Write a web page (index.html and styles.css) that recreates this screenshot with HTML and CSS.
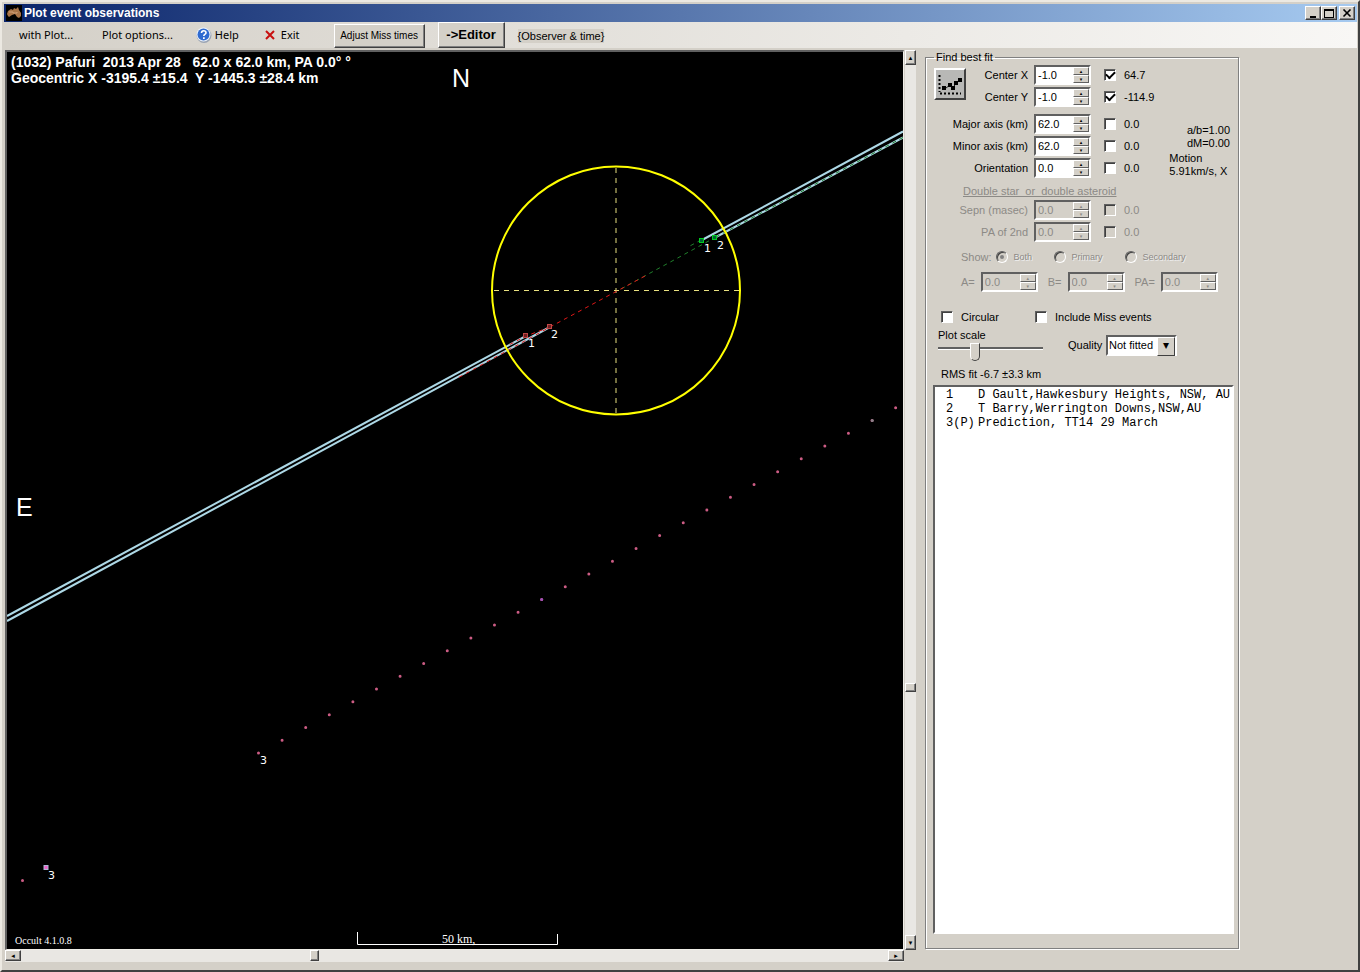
FILE: index.html
```html
<!DOCTYPE html>
<html lang="en">
<head>
<meta charset="utf-8">
<title>Plot event observations</title>
<link rel="stylesheet" href="styles.css">
</head>
<body>
<div class="window">
  <header class="titlebar">
    <svg class="app-icon" viewBox="0 0 16 16" aria-hidden="true"><rect width="16" height="16" fill="#000"/><path d="M1 9 2 6 5 4 7 5 8 3 10 4 12 2 13 5 15 8 15 11 13 13 11 12 9 9 6 10 3 12 2 11Z" fill="#a87448"/><path d="M3 7h4v1h4v-1" stroke="#cfa078" fill="none"/></svg>
    <h1>Plot event observations</h1>
    <div class="window-buttons">
      <button class="win-btn" aria-label="Minimize"><svg viewBox="0 0 10 9"><path d="M2 7h6v2H2z"/></svg></button>
      <button class="win-btn" aria-label="Maximize"><svg viewBox="0 0 10 9"><path d="M0 0h10v9H0zM1 2v6h8V2z" fill-rule="evenodd"/></svg></button>
      <button class="win-btn close" aria-label="Close"><svg viewBox="0 0 10 9"><path d="m1.500.5 7 7m0-7-7 7" stroke="#000" stroke-width="1.600"/></svg></button>
    </div>
  </header>
  <nav class="toolbar">
    <button class="menu">with Plot...</button>
    <button class="menu options">Plot options...</button>
    <button class="menu help"><svg viewBox="0 0 16 16" aria-hidden="true"><circle cx="8" cy="8.500" r="7.500" fill="#9aa4b4"/><circle cx="7.500" cy="7.500" r="7" fill="#eef4fb"/><circle cx="7.500" cy="7.500" r="6" fill="#2f6ad0"/><path d="M5.500 6q0-2.300 2.200-2.300T10 5.700q0 1-1.200 1.700-1 .6-1 1.700" fill="none" stroke="#fff" stroke-width="1.600"/><path d="M7 10.300h1.700v1.600H7z" fill="#fff"/></svg>Help</button>
    <button class="menu exit"><svg viewBox="0 0 10 10" aria-hidden="true"><path d="m1 1 8 8M9 1 1 9" stroke="#c81010" stroke-width="2"/></svg>Exit</button>
    <button class="push adjust">Adjust Miss times</button>
    <button class="push editor">-&gt;Editor</button>
    <span class="hint">{Observer &amp; time}</span>
  </nav>
  <main class="workspace">
    <section class="viewer">
      <div class="plot">
        <svg viewBox="7 52 896 896" preserveAspectRatio="xMinYMin meet" role="img" aria-label="Occultation chords">
          <g class="tracks">
            <path d="M903 131.500 702 240M903 137.500 716 237M526 336 7 616M550 327 7 621"/>
          </g>
          <path class="axis" d="M616 168V415M494 290.500H740"/>
          <path class="green" d="M903 137.500 716 237M701 240 688 247M716 237 621 289"/>
          <path class="red" d="M645 276 550 327 456 379M550 327 526 336 505 347"/>
          <circle class="body" cx="616" cy="290.500" r="124"/>
          <g class="mark-green"><rect x="699.500" y="238.500" width="4" height="4"/><rect x="712.500" y="235.500" width="4" height="4"/></g>
          <g class="mark-red"><rect x="523.500" y="333.500" width="4" height="4"/><rect x="547.500" y="324.500" width="4" height="4"/></g>
          <path class="prediction" d="M258.500 753 896 407.500"/>
          <path class="prediction" d="M22.500 880.500h.1"/>
          <path class="dot-grey" d="M872.300 420.500h.1"/>
          <path class="dot-violet" d="M541.700 599.600h.1"/>
          <rect class="marker" x="44" y="865.500" width="4" height="4"/>
          <g class="num"><text x="704" y="252">1</text><text x="717" y="249">2</text><text x="528" y="347">1</text><text x="551" y="338">2</text><text x="260" y="764">3</text><text x="48" y="879">3</text></g>
          <g class="caption"><text x="11" y="67">(1032) Pafuri  2013 Apr 28   62.0 x 62.0 km, PA 0.0° °</text><text x="11" y="83">Geocentric X -3195.4 ±15.4  Y -1445.3 ±28.4 km</text></g>
          <g class="compass"><text x="452" y="87">N</text><text x="16" y="516">E</text></g>
          <g class="serif"><text x="15" y="944">Occult 4.1.0.8</text><text x="442" y="943" class="scale">50 km,</text></g>
          <path class="rule" d="M357.500 932V944.500H557.500V934"/>
        </svg>
      </div>
      <div class="scroll vertical"><button aria-label="Scroll up">▴</button><i class="thumb"></i><button aria-label="Scroll down">▾</button></div>
      <div class="scroll horizontal"><button aria-label="Scroll left">◂</button><i class="thumb"></i><button aria-label="Scroll right">▸</button></div>
    </section>
    <fieldset class="fit">
      <legend>Find best fit</legend>
      <div class="block center">
        <button class="chart" aria-label="Fit"><svg viewBox="0 0 28 28"><path d="M3.500 5v17M4 23.500h21" stroke="#000" stroke-width="2" stroke-dasharray="2 2"/><path d="m7 18 3 0 4-3 3 3 3-5 4-3" fill="none" stroke="#222"/><path d="M6 16h4v4H6zM12 13h4v4h-4zM15 16h4v4h-4zM18 11h4v4h-4zM22 8h4v4h-4z"/></svg></button>
        <div class="rows">
          <div class="field"><label for="cx">Center X</label><span class="spin"><input id="cx" value="-1.0"><span class="arrows"><button aria-label="Up">▴</button><button aria-label="Down">▾</button></span></span><input type="checkbox" id="k1" checked><label for="k1">64.7</label></div>
          <div class="field"><label for="cy">Center Y</label><span class="spin"><input id="cy" value="-1.0"><span class="arrows"><button aria-label="Up">▴</button><button aria-label="Down">▾</button></span></span><input type="checkbox" id="k2" checked><label for="k2">-114.9</label></div>
        </div>
      </div>
      <div class="block shape">
        <div class="rows">
          <div class="field"><label for="ma">Major axis (km)</label><span class="spin"><input id="ma" value="62.0"><span class="arrows"><button aria-label="Up">▴</button><button aria-label="Down">▾</button></span></span><input type="checkbox" id="k3"><label for="k3">0.0</label></div>
          <div class="field"><label for="mi">Minor axis (km)</label><span class="spin"><input id="mi" value="62.0"><span class="arrows"><button aria-label="Up">▴</button><button aria-label="Down">▾</button></span></span><input type="checkbox" id="k4"><label for="k4">0.0</label></div>
          <div class="field"><label for="or">Orientation</label><span class="spin"><input id="or" value="0.0"><span class="arrows"><button aria-label="Up">▴</button><button aria-label="Down">▾</button></span></span><input type="checkbox" id="k5"><label for="k5">0.0</label></div>
        </div>
        <div class="motion"><p class="right">a/b=1.00<br>dM=0.00</p><p>Motion<br>5.91km/s, X</p></div>
      </div>
      <div class="off">
        <p class="double">Double star&nbsp; or&nbsp; double asteroid</p>
        <div class="rows">
          <div class="field"><label for="se">Sepn (masec)</label><span class="spin"><input id="se" value="0.0" disabled><span class="arrows"><button aria-label="Up" disabled>▴</button><button aria-label="Down" disabled>▾</button></span></span><input type="checkbox" id="k6" disabled><label for="k6">0.0</label></div>
          <div class="field"><label for="p2">PA of 2nd</label><span class="spin"><input id="p2" value="0.0" disabled><span class="arrows"><button aria-label="Up" disabled>▴</button><button aria-label="Down" disabled>▾</button></span></span><input type="checkbox" id="k7" disabled><label for="k7">0.0</label></div>
        </div>
        <div class="show"><span>Show:</span><label class="both"><input type="radio" name="show" checked disabled>Both</label><label class="primary"><input type="radio" name="show" disabled>Primary</label><label><input type="radio" name="show" disabled>Secondary</label></div>
        <div class="abc">
          <label for="a">A=</label><span class="spin"><input id="a" value="0.0" disabled><span class="arrows"><button aria-label="Up" disabled>▴</button><button aria-label="Down" disabled>▾</button></span></span>
          <label for="b">B=</label><span class="spin"><input id="b" value="0.0" disabled><span class="arrows"><button aria-label="Up" disabled>▴</button><button aria-label="Down" disabled>▾</button></span></span>
          <label for="pa">PA=</label><span class="spin"><input id="pa" value="0.0" disabled><span class="arrows"><button aria-label="Up" disabled>▴</button><button aria-label="Down" disabled>▾</button></span></span>
        </div>
      </div>
      <div class="checks"><label class="circular"><input type="checkbox">Circular</label><label><input type="checkbox">Include Miss events</label></div>
      <div class="scale-row">
        <div class="scale-box"><label for="ps">Plot scale</label><input type="range" id="ps" min="0" max="100" value="34"></div>
        <label for="q" class="quality">Quality</label>
        <span class="combo"><select id="q"><option>Not fitted</option></select></span>
      </div>
      <p class="rms">RMS fit -6.7 ±3.3 km</p>
      <ul class="observers"><li><span>1</span>D Gault,Hawkesbury Heights, NSW, AU</li><li><span>2</span>T Barry,Werrington Downs,NSW,AU</li><li><span>3(P)</span>Prediction, TT14 29 March</li></ul>
    </fieldset>
  </main>
</div>
</body>
</html>
```
FILE: styles.css
```css
* { box-sizing: border-box; }
body { margin: 0; background: #d4d0c8; color: #000; font: 11px/14px "Liberation Sans", Arial, sans-serif; }
button, input, select { font: inherit; color: inherit; margin: 0; padding: 0; border-radius: 0; }
p, h1, ul { margin: 0; padding: 0; }
svg { display: block; }

.window { height: 100vh; min-height: 640px; display: flex; flex-direction: column; padding: 2px; border: 2px solid; border-color: #ece9e2 #404040 #404040 #ece9e2; padding-right: 1px; padding-bottom: 8px; }

.titlebar { height: 18px; flex: none; display: flex; align-items: center; gap: 2px; padding: 0 2px; background: linear-gradient(90deg, #0a246a, #a6caf0); color: #fff; }
.app-icon { width: 16px; height: 16px; }
.titlebar h1 { flex: 1; font-size: 12px; font-weight: bold; }
.window-buttons { display: flex; }
.win-btn { width: 16px; height: 14px; display: grid; place-items: center; background: #d4d0c8; border: 1px solid; border-color: #fff #404040 #404040 #fff; box-shadow: inset -1px -1px #808080; }
.win-btn svg { width: 10px; height: 9px; }
.close { margin-left: 2px; }

.toolbar { height: 26px; margin-bottom: 2px; flex: none; display: flex; align-items: flex-start; background: linear-gradient(90deg, #d4d0c8, #f8f7f5); padding-left: 15px; }
.menu { display: flex; align-items: center; height: 26px; border: 0; background: none; white-space: nowrap; font-family: "Noto Sans", Tahoma, sans-serif; }
.options { margin-left: 29px; }
.help { margin-left: 23px; gap: 3px; }
.help svg { width: 16px; height: 16px; }
.exit { margin-left: 26px; gap: 6px; }
.exit svg { width: 10px; height: 10px; }
.push { background: #d4d0c8; border: 1px solid; border-color: #fff #404040 #404040 #fff; box-shadow: inset -1px -1px #808080; white-space: nowrap; }
.adjust { width: 91px; height: 24px; margin: 2px 0 0 34px; font-size: 10px; }
.editor { width: 67px; height: 26px; margin-left: 13px; font-size: 13px; font-weight: bold; }
.hint { margin: 7px 0 0 13px; background: #d4d0c8; }

.workspace { flex: 1; min-height: 0; display: flex; gap: 9px; padding: 0 118px 0 1px; }
.viewer { flex: 1; min-width: 0; display: grid; grid-template: minmax(0, 1fr) 12px / minmax(0, 1fr) 12px; }
.plot { background: #000; border: 2px solid; border-color: #606060 #f0eee8 #f0eee8 #606060; border-right-width: 1px; border-bottom-width: 1px; overflow: hidden; }
.plot svg { width: 100%; height: 100%; }
.plot text { fill: #fff; white-space: pre; }
.tracks { fill: none; stroke: #add8e6; stroke-width: 2; }
.axis { fill: none; stroke: #e8e080; stroke-dasharray: 5 5; }
.green { fill: none; stroke: #20802c; stroke-dasharray: 4 4; }
.red { fill: none; stroke: #e01818; stroke-dasharray: 4 4; }
.body { fill: none; stroke: #ff0; stroke-width: 2; }
.mark-green { fill: #063; stroke: #0c2; }
.mark-red { fill: #702020; stroke: #c04848; }
.prediction, .dot-grey, .dot-violet { stroke: #cc5c84; stroke-width: 3; stroke-linecap: round; stroke-dasharray: 0 26.840; }
.dot-grey { stroke: #8c8088; }
.dot-violet { stroke: #a050b8; }
.marker { fill: #f060c8; stroke: #b0b8d8; }
.num { font: 11px "DejaVu Sans", sans-serif; }
.caption { font: bold 14px "Liberation Sans", sans-serif; }
.compass { font: 25px "Liberation Sans", sans-serif; }
.serif { font: 10px "Liberation Serif", serif; }
.scale { font-size: 12px; }
.rule { fill: none; stroke: #fff; }

.scroll { display: flex; background: #e9e7e3; }
.scroll button { flex: none; padding: 0; font: 7px/8px "DejaVu Sans", sans-serif; }
.scroll button, .thumb { background: #d4d0c8; border: 1px solid; border-color: #fff #404040 #404040 #fff; box-shadow: inset -1px -1px #808080; }
.vertical { flex-direction: column; justify-content: space-between; margin-left: 1px; }
.vertical button { width: 11px; height: 15px; }
.vertical .thumb { width: 11px; height: 9px; margin-top: auto; margin-bottom: 243px; }
.horizontal { justify-content: space-between; }
.horizontal button { width: 16px; height: 11px; }
.horizontal .thumb { width: 9px; height: 11px; margin-left: 289px; margin-right: auto; }

.fit { flex: none; width: 314px; margin: 0 0 13px; padding: 0; border: 1px solid #808080; box-shadow: 1px 1px #fff, inset 1px 1px #fff; display: flex; flex-direction: column; min-width: 0; }
.fit legend { margin-left: 8px; padding: 0 2px; line-height: 14px; }
.block { display: flex; padding-left: 8px; }
.shape { margin-top: 5px; }
.rows { flex: none; }
.field { display: grid; grid-template-columns: 94px 57px 12px auto; column-gap: 6px; height: 22px; align-items: center; }
.center .field { grid-template-columns: 62px 57px 12px auto; }
.field > label:first-child { text-align: right; white-space: nowrap; }
.field input[type=checkbox] { margin-left: 7px; }
.field > label:last-child { margin-left: 9px; }
.chart { width: 32px; height: 32px; margin-top: 4px; background: #b8b8b6; border: 2px solid; border-color: #fff #404040 #404040 #fff; }
.chart svg { width: 28px; height: 28px; }
.spin { display: flex; width: 57px; height: 20px; border: 2px solid; border-color: #606060 #fff #fff #606060; background: #fff; }
.spin > input { flex: 1; width: 0; border: 0; padding-left: 2px; background: none; }
.arrows { width: 16px; display: flex; flex-direction: column; }
.arrows button { flex: 1; min-height: 0; font: 5px/5px "DejaVu Sans", sans-serif; background: #d4d0c8; border: 1px solid; border-color: #fff #606060 #606060 #fff; overflow: hidden; }
input[type=checkbox], input[type=radio] { appearance: none; width: 12px; height: 12px; flex: none; border: 1px solid; border-color: #606060 #fff #fff #606060; box-shadow: inset 1px 1px #404040; background: #fff; display: grid; place-items: center; }
input[type=checkbox]:checked::before { content: ""; width: 7px; height: 4px; border: solid #000; border-width: 0 0 2px 2px; transform: translateY(-1px) rotate(-45deg); }
input[type=radio] { border-radius: 50%; }
input[type=radio]:checked::before { content: ""; width: 4px; height: 4px; border-radius: 50%; background: #808080; }
.motion { flex: 1; padding: 11px 8px 0 30px; line-height: 13px; white-space: nowrap; }
.right { text-align: right; margin-bottom: 2px; }

.off { color: #8c8a86; }
.off .spin, .off input { background: transparent; }
.double { margin: 5px 0 1px 37px; text-decoration: underline; }
.off .rows { padding-left: 8px; }
.show { display: flex; align-items: center; height: 28px; padding-left: 35px; }
.show label { display: flex; align-items: center; gap: 6px; font-size: 9px; text-shadow: 1px 1px #eee; }
.show .both { width: 58px; margin-left: 4px; }
.show .primary { width: 71px; }
.abc { display: flex; align-items: center; height: 22px; padding-left: 35px; gap: 6px; }
.abc .spin + label { margin-left: 4px; }
.checks { display: flex; height: 26px; margin-top: 11px; align-items: center; padding-left: 15px; }
.checks label { display: flex; align-items: center; gap: 8px; }
.circular { width: 94px; }
.scale-row { display: flex; align-items: center; padding-left: 12px; height: 30px; }
.scale-box { width: 107px; display: flex; flex-direction: column; }
.scale-box label { line-height: 13px; }
.scale-box input { appearance: none; width: 105px; height: 19px; background: linear-gradient(#606060, #606060) 0 5px / 100% 2px no-repeat, linear-gradient(#fff, #fff) 0 7px / 100% 1px no-repeat; }
.scale-box input::-webkit-slider-thumb { appearance: none; width: 10px; height: 18px; background: #d4d0c8; border: 1px solid; border-color: #fff #404040 #404040 #fff; border-radius: 0 0 5px 5px; }
.quality { margin-left: 23px; width: 38px; }
.combo { position: relative; border: 2px solid; border-color: #606060 #fff #fff #606060; background: #fff; width: 71px; height: 21px; display: block; }
.combo select { appearance: none; width: 100%; height: 17px; border: 0; background: #fff; padding-left: 1px; }
.combo::after { content: "▾"; position: absolute; right: 0; top: 0; width: 16px; height: 17px; background: #d4d0c8; border: 1px solid; border-color: #fff #404040 #404040 #fff; font: 12px/14px "DejaVu Sans", sans-serif; text-align: center; pointer-events: none; }
.rms { margin: 7px 0 4px 15px; }
.observers { flex: 1; list-style: none; margin: 0 4px 14px 7px; padding: 1px 0 0 11px; background: #fff; border: 2px solid; border-color: #606060 #fff #fff #606060; overflow: hidden; font: 12px/14px "Liberation Mono", "Courier New", monospace; white-space: pre; }
.observers span { display: inline-block; width: 32px; }
```
